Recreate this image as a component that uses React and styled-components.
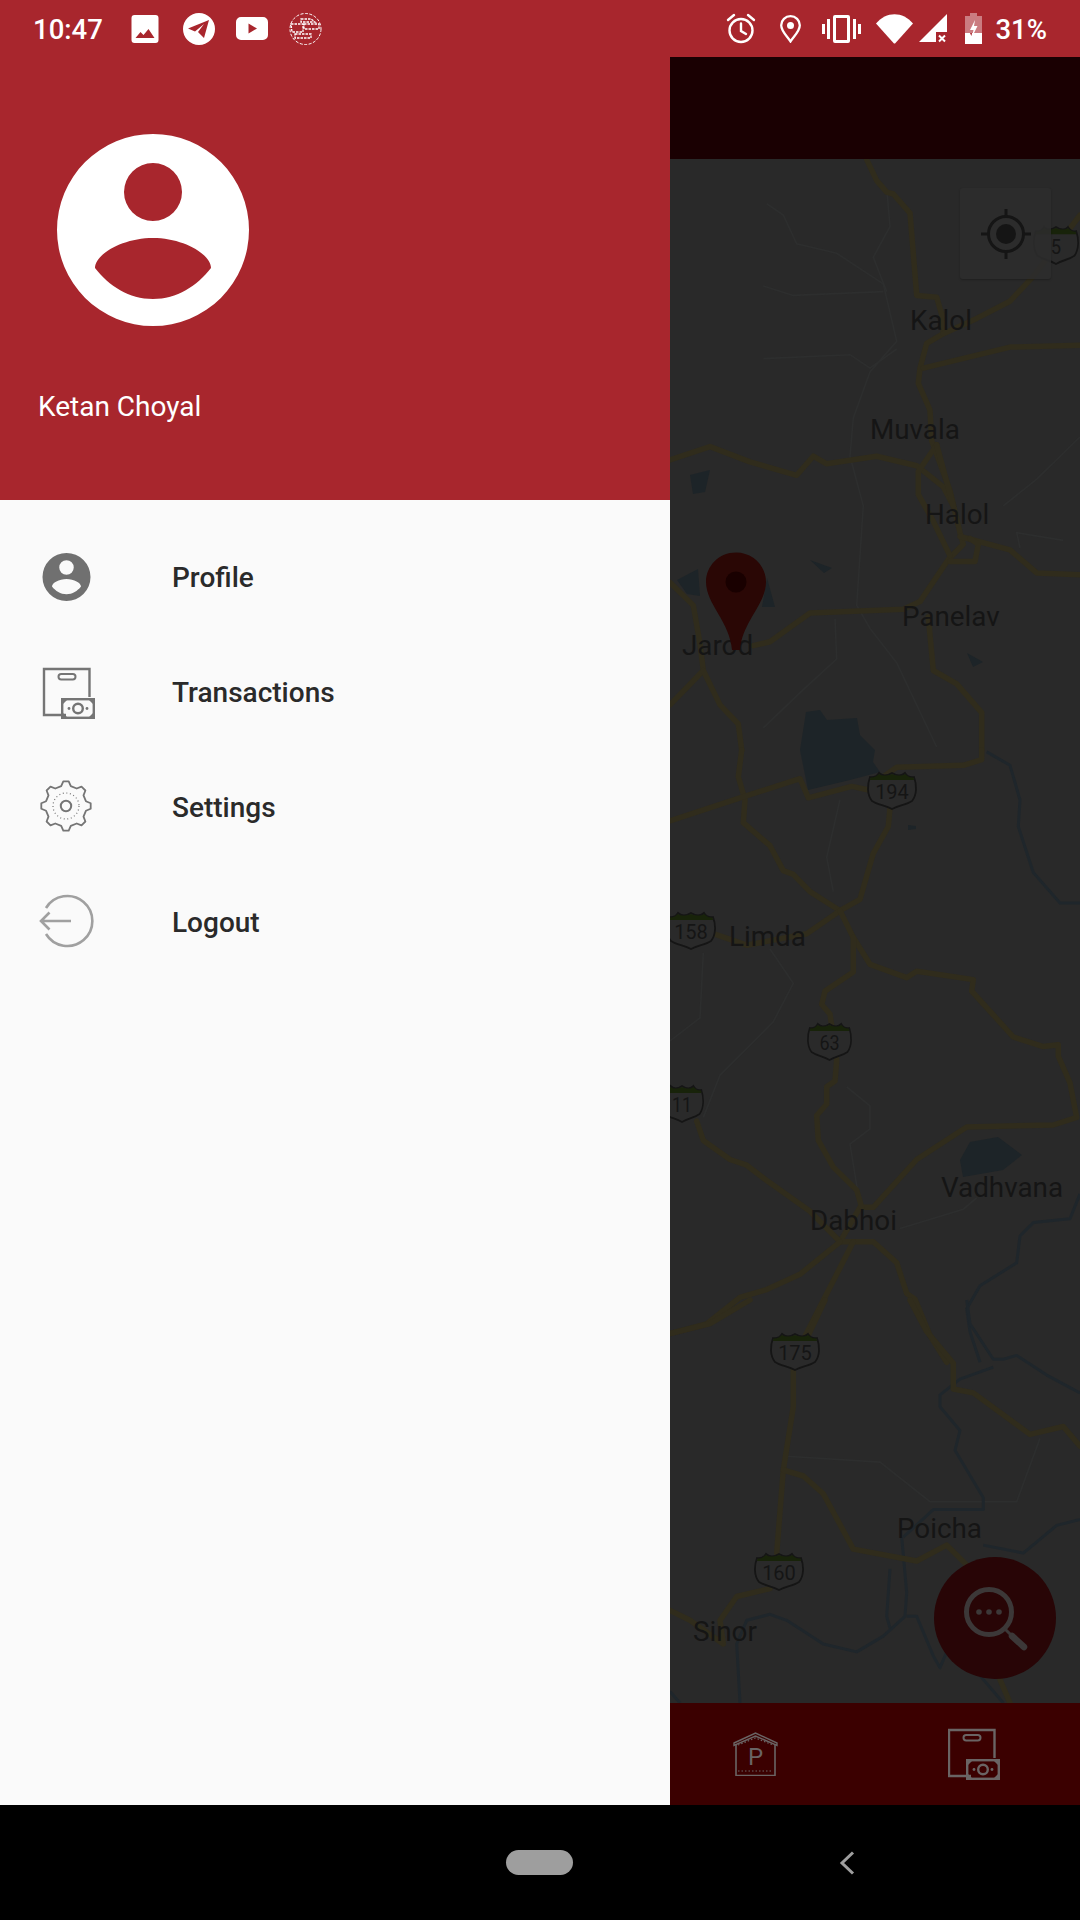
import React from "react";
import styled, { createGlobalStyle } from "styled-components";

const Global = createGlobalStyle`
  html, body { margin: 0; padding: 0; background: #000; }
  #root { width: 1080px; height: 1920px; overflow: hidden; }
  * { box-sizing: border-box; }
`;

const Page = styled.div`
  width: 1080px; height: 1920px; display: flex; flex-direction: column;
  font-family: Roboto, "Noto Sans", sans-serif; background: #000;
`;

/* ---------- status bar ---------- */
const StatusBar = styled.header`
  height: 57px; flex: none; background: #a8262d; color: #fff;
  display: flex; align-items: center; justify-content: space-between;
  padding: 0 33px 0 33px;
`;
const StatusGroup = styled.div`display: flex; align-items: center;`;
const StatusText = styled.span`
  font-size: 27.5px; font-weight: 500; line-height: 30px; padding-top: 2px; margin-left: ${p => p.$gap || 0}px;
`;
const StatusIcon = styled.svg`
  display: block; flex: none; margin-left: ${p => p.$gap || 0}px; color: #fff;
`;

/* ---------- main split ---------- */
const Body = styled.div`flex: 1; min-height: 0; display: flex;`;
const Drawer = styled.aside`
  width: 670px; flex: none; display: flex; flex-direction: column; background: #fafafa;
`;
const DrawerHeader = styled.div`
  height: 443px; flex: none; background: #a8262d; color: #fff;
  padding: 77px 0 0 38px; display: flex; flex-direction: column;
`;
const Avatar = styled.svg`display: block; margin-left: 19px; color: #fff;`;
const UserName = styled.div`
  margin-top: 62px; font-size: 28px; line-height: 38px; font-weight: 400;
`;
const Menu = styled.nav`padding-top: 18px; display: flex; flex-direction: column;`;
const MenuRow = styled.div`
  height: 115px; display: flex; align-items: center; padding-left: 38px;
`;
const MenuIcon = styled.svg`display: block; flex: none; margin-right: 74px;`;
const MenuLabel = styled.span`
  font-size: 28px; font-weight: 500; color: #2a2a2a; line-height: 36px; padding-top: 5px;
`;

const Behind = styled.main`flex: 1; min-width: 0; display: flex; flex-direction: column;`;
const TopBar = styled.div`height: 102px; flex: none; background: #1a0002;`;
const MapArea = styled.div`position: relative; flex: 1; min-height: 0; background: #292929; overflow: hidden;`;
const MapSvg = styled.svg`display: block; width: 410px; height: 1544px;`;
const MapLabel = styled.text`
  font-family: Roboto, sans-serif; font-size: 27.8px; fill: #151515;
`;
const ShieldNum = styled.text`
  font-family: Roboto, sans-serif; font-size: 20px; fill: #151515; text-anchor: middle;
`;
const LocateButton = styled.div`
  position: absolute; top: 29px; right: 29px; width: 91px; height: 91px; border-radius: 3px;
  background: rgba(44,44,44,.88); box-shadow: 0 1px 2px rgba(0,0,0,.25);
  display: flex; align-items: center; justify-content: center;
`;
const Fab = styled.div`
  position: absolute; right: 24px; bottom: 24px; width: 122px; height: 122px; border-radius: 50%;
  background: #280506; display: flex; align-items: center; justify-content: center;
`;
const BottomBar = styled.div`
  height: 102px; flex: none; background: #3b0000; display: flex; align-items: center;
  justify-content: space-between; padding: 0 80px 0 63px;
`;
const BarIcon = styled.svg`display: block; flex: none;`;

/* ---------- system nav ---------- */
const NavBar = styled.footer`
  height: 115px; flex: none; background: #000; display: flex; align-items: center;
  padding-left: 506px;
`;
const HomePill = styled.div`width: 67px; height: 25px; border-radius: 13px; background: #9e9e9e;`;
const BackIcon = styled.svg`display: block; margin-left: 266px;`;

/* ---------- icons ---------- */
const AVATAR_PATH =
  "M96 0a96 96 0 1 0 0 192a96 96 0 1 0 0-192Z M96 29a29 29 0 1 1 0 58a29 29 0 1 1 0-58Z M38 134C38 120 66 104 96 104C126 104 154 120 154 134C140 152 120 165 96 165C72 165 52 152 38 134Z";

const gearPath = (() => {
  const pts = [];
  const n = 8;
  for (let i = 0; i < n; i++) {
    const a = (i / n) * Math.PI * 2 - Math.PI / 2;
    const step = (Math.PI * 2) / n;
    const p = (r, d) => [28 + r * Math.cos(a + d * step), 30 + r * Math.sin(a + d * step)];
    pts.push(p(20.5, -0.3), p(24.8, -0.14), p(24.8, 0.14), p(20.5, 0.3));
  }
  return "M" + pts.map(([x, y]) => `${x.toFixed(1)} ${y.toFixed(1)}`).join("L") + "Z";
})();

const Money = ({ x, y, color }) => (
  <g transform={`translate(${x} ${y})`} stroke={color} fill="none">
    <rect x="1.2" y="1.2" width="31.6" height="18.6" strokeWidth="2.4" />
    <circle cx="17" cy="10.5" r="4.8" strokeWidth="2.4" />
    <circle cx="8" cy="10.5" r="1.4" fill={color} stroke="none" />
    <circle cx="26" cy="10.5" r="1.4" fill={color} stroke="none" />
    <path d="M1 1H7L1 7ZM33 1H27L33 7ZM1 20H7L1 14ZM33 20H27L33 14Z" fill={color} stroke="none" />
  </g>
);

const TxnGlyph = ({ color }) => (
  <>
    <path d="M51.5 36V8H6V54H28" fill="none" stroke={color} strokeWidth="2.4" />
    <rect x="20.5" y="13" width="17" height="5.5" rx="2.7" fill="none" stroke={color} strokeWidth="2" />
    <Money x={23} y={37} color={color} />
  </>
);

const Road = { fill: "none", stroke: "#302c1c", strokeWidth: 5.5, strokeLinejoin: "round", strokeLinecap: "round" };

const mapPts = {
  a: { ox: 670, oy: 150, sy: 0.3827 },
  b: { ox: 670, oy: 750, sy: 0.3827 },
  c: { ox: 670, oy: 1300, sy: 0.3954 },
};
const zPath = (crop, s) => {
  const { ox, oy, sy } = mapPts[crop];
  const n = s.trim().split(/\s+/).map(t => t.split(",").map(Number));
  return "M" + n.map(([x, y]) => `${(ox + x / 3).toFixed(1)} ${(oy + y * sy).toFixed(1)}`).join("L");
};

const roads = [
  ["a", "590,25 620,80 650,110 670,115 720,165 740,380 800,385 815,430 820,480 770,505 750,570 745,610 780,680 785,760 840,890 870,1000 880,1030 835,1070 750,1180 700,1200 420,1210 300,1285 250,1295"],
  ["a", "820,480 920,440 1020,395 1090,330 1230,170"],
  ["a", "760,570 1020,515 1230,510"],
  ["a", "0,810 120,775 240,815 380,850 430,800 470,820 620,800 740,825 820,880 850,930"],
  ["a", "800,770 745,840 745,900 790,970 840,1060"],
  ["a", "800,770 850,930"],
  ["a", "870,1010 1020,1045 1100,1105 1230,1110"],
  ["a", "900,1015 925,1030 915,1075 840,1075"],
  ["a", "775,1220 790,1360 860,1395 935,1470 935,1568"],
  ["a", "0,1130 70,1190 90,1290 100,1360 0,1450"],
  ["a", "100,1360 150,1450 205,1500 215,1568"],
  ["b", "935,0 935,25 880,40 680,45 640,70"],
  ["b", "215,0 205,70 225,130 220,190 300,250 340,315 370,325 420,370 510,420"],
  ["b", "0,185 210,125 390,75 415,125 545,95 600,105"],
  ["b", "660,150 655,200 610,270 570,390 510,420 410,480 230,510 130,480"],
  ["b", "510,420 550,490 600,560 710,595 740,578 910,600 905,630 1030,750 1120,775 1165,770 1165,800 1200,870 1220,960 1150,980 890,985 740,1070 610,1195 570,1195 510,1285"],
  ["b", "550,490 550,580 465,630 455,665 480,690 500,810 495,865 470,880 470,925 440,955 445,1020 490,1090 560,1150 575,1195"],
  ["b", "80,970 100,1020 180,1070 230,1085 290,1125 420,1205 510,1285 610,1285 680,1340 710,1420 735,1435 780,1530 830,1600"],
  ["b", "510,1285 390,1370 290,1410 210,1430 110,1500 0,1525"],
  ["b", "550,1285 400,1540"],
  ["c", "720,0 770,80 850,160 850,225 910,235 1080,340 1180,320 1230,370"],
  ["c", "0,85 120,60 240,0"],
  ["c", "465,0 370,170 370,270 340,430 320,640"],
  ["c", "340,430 400,445 460,490 550,630 740,660 830,620 890,670"],
  ["c", "985,950 1020,1019"],
  ["c", "300,730 200,750 150,810 160,870 60,810 0,785"],
];

const rivers = [
  ["b", "1230,1160 1200,1225 1090,1235 1050,1270 1040,1340 930,1400 890,1460 900,1520 930,1600"],
  ["c", "890,0 900,60 970,150 1000,150 1040,140 1130,190 1230,235"],
  ["c", "970,170 870,200 810,240 810,270 870,330 855,380 940,500 940,530 790,530 700,600"],
  ["c", "695,600 710,740 705,800 640,850 560,890 460,870 350,810 300,795 230,810 200,870 210,1019"],
  ["c", "660,680 650,800 660,830"],
  ["c", "710,800 740,800 790,900 810,930 830,890"],
  ["c", "1230,555 1160,570 1060,640 940,620"],
  ["c", "930,950 1000,1019"],
  ["c", "0,990 30,1019"],
  ["b", "950,5 1020,40 1050,130 1045,200 1090,320 1170,400 1230,400"],
];

const thin = [
  ["a", "290,140 340,170 380,245 500,270 640,350 680,500 600,580 550,700 540,800 580,930 560,1190 600,1250 680,1340 800,1560"],
  ["a", "280,355 370,380 640,370"],
  ["a", "280,545 540,535 600,570 680,520"],
  ["a", "650,100 660,200 610,280 650,370"],
  ["a", "280,1510 400,1410 500,1330 495,1225"],
  ["a", "1050,1040 1040,1000 1180,1020"],
  ["a", "1000,930 1100,860 1230,750"],
  ["b", "510,130 470,280 490,370"],
  ["b", "300,520 370,610 310,710 150,850 100,960"],
  ["b", "100,530 90,700 0,760"],
  ["b", "530,880 600,930 600,990 540,1030 570,1190"],
  ["b", "690,1250 880,1200 920,1170"],
  ["c", "350,395 630,410 780,510 1040,510 1110,350"],
];

const waters = [
  "800,750 806,712 820,710 827,720 857,718 860,735 875,750 873,762 880,772 850,780 808,790",
  "690,475 710,470 705,492 693,494",
  "677,580 698,569 700,596 687,594",
  "767,578 775,607 762,607",
  "967,653 983,662 973,667",
  "810,560 832,568 824,573",
  "960,1160 970,1142 998,1137 1022,1155 1003,1170 963,1177",
  "908,825 916,826 916,829 908,830",
];

const Shield = ({ x, y, w = 50, h = 38, n }) => (
  <g transform={`translate(${x} ${y}) scale(${w / 50} ${h / 38})`}>
    <path d="M3 6C7 7 10 5 12 2C15 5 20 5 25 2C30 5 35 5 38 2C40 5 43 7 47 6C50 14 50 24 45 30C39 34 32 34 25 38C18 34 11 34 5 30C0 24 0 14 3 6Z"
      fill="#2a2a2a" stroke="#151515" strokeWidth="1.8" />
    <path d="M3.5 6.5C7 7 10 5 12 3C15 5 20 5 25 3C30 5 35 5 38 3C40 5 43 7 46.5 6.5L47 9H3Z" fill="#18230a" />
    <ShieldNum x="25" y="28">{n}</ShieldNum>
  </g>
);

const labels = [
  ["Kalol", 910, 330], ["Muvala", 870, 439], ["Halol", 925, 524], ["Panelav", 902, 626],
  ["Jarod", 682, 655], ["Limda", 729, 946], ["Dabhoi", 810, 1230], ["Vadhvana", 941, 1197],
  ["Poicha", 897, 1538], ["Sinor", 693, 1641],
];

export default function App() {
  return (
    <Page>
      <Global />
      <StatusBar>
        <StatusGroup>
          <StatusText>10:47</StatusText>
          <StatusIcon $gap={28} width="28" height="28" viewBox="0 0 27 28">
            <path fillRule="evenodd" fill="currentColor"
              d="M3 0H24A3 3 0 0 1 27 3V25A3 3 0 0 1 24 28H3A3 3 0 0 1 0 25V3A3 3 0 0 1 3 0ZM4 23H23L17 14L12 20L9 17Z" />
          </StatusIcon>
          <StatusIcon $gap={24} width="32" height="34" viewBox="0 0 32 34">
            <path fillRule="evenodd" fill="currentColor"
              d="M16 1A16 16 0 1 0 16 33A16 16 0 1 0 16 1ZM26 8L5 16.5L12 19.5L21 12L15 20L21 26Z" />
          </StatusIcon>
          <StatusIcon $gap={21} width="32" height="23" viewBox="0 0 32 23">
            <path fillRule="evenodd" fill="currentColor"
              d="M5 0H27A5 5 0 0 1 32 5V18A5 5 0 0 1 27 23H5A5 5 0 0 1 0 18V5A5 5 0 0 1 5 0ZM12.5 6.5V16.5L21 11.5Z" />
          </StatusIcon>
          <StatusIcon $gap={21} width="33" height="34" viewBox="0 0 33 34">
            <circle cx="16.5" cy="17" r="15.5" fill="none" stroke="currentColor" strokeWidth="1" strokeDasharray="3 1.5" />
            <path d="M2 12H14V20H3ZM15 12H30V17H15ZM6 22H22V26H6ZM12 7H22L26 10H12Z" fill="none" stroke="currentColor" strokeWidth="1.3" strokeDasharray="2.5 1" />
          </StatusIcon>
        </StatusGroup>
        <StatusGroup>
          <StatusIcon width="30" height="31" viewBox="0 0 30 31" fill="none" stroke="currentColor" strokeWidth="2.4">
            <circle cx="15" cy="17.5" r="11.5" />
            <path d="M15 10.5V18L20 21M2 7L8 2M28 7L22 2" strokeLinecap="round" />
          </StatusIcon>
          <StatusIcon $gap={24} width="21" height="28" viewBox="0 0 21 28">
            <path d="M10.5 1.2C5.3 1.2 1.2 5.3 1.2 10.3C1.2 16.5 7.5 21.5 10.5 26.5C13.5 21.5 19.8 16.5 19.8 10.3C19.8 5.3 15.7 1.2 10.5 1.2Z" fill="none" stroke="currentColor" strokeWidth="2.3" />
            <circle cx="10.5" cy="10.5" r="3.5" fill="currentColor" />
          </StatusIcon>
          <StatusIcon $gap={21} width="39" height="28" viewBox="0 0 39 28" fill="currentColor">
            <path fillRule="evenodd" d="M13 0H26A2 2 0 0 1 28 2V26A2 2 0 0 1 26 28H13A2 2 0 0 1 11 26V2A2 2 0 0 1 13 0ZM14 3V25H25V3Z" />
            <rect x="5" y="4" width="3" height="20" /><rect x="0" y="9" width="3" height="10" />
            <rect x="31" y="4" width="3" height="20" /><rect x="36" y="9" width="3" height="10" />
          </StatusIcon>
          <StatusIcon $gap={15} width="37" height="30" viewBox="0 0 37 30">
            <path d="M0 9.5C10 -3 27 -3 37 9.5L19.5 29a1.4 1.4 0 0 1-2 0Z" fill="currentColor" />
          </StatusIcon>
          <StatusIcon $gap={6} width="28" height="29" viewBox="0 0 28 29">
            <path fillRule="evenodd" fill="currentColor" d="M28 0V18H17V28H0Z" />
            <path d="M20 21.5L26 27.5M26 21.5L20 27.5" stroke="currentColor" strokeWidth="2" />
          </StatusIcon>
          <StatusIcon $gap={18} width="17" height="31" viewBox="0 0 17 31">
            <path d="M5 0H12V3H17V20H0V3H5Z" fill="currentColor" opacity=".4" />
            <path d="M0 20H17V31H0Z" fill="currentColor" />
            <path d="M10 7L5 17H8.5L7 24L12.5 13H9Z" fill="#fff" />
            <path d="M5 20L7 20L6.4 23Z" fill="#a8262d" />
          </StatusIcon>
          <StatusText $gap={13}>31%</StatusText>
        </StatusGroup>
      </StatusBar>

      <Body>
        <Drawer>
          <DrawerHeader>
            <Avatar width="192" height="192" viewBox="0 0 192 192">
              <path d={AVATAR_PATH} fill="currentColor" fillRule="evenodd" />
            </Avatar>
            <UserName>Ketan Choyal</UserName>
          </DrawerHeader>
          <Menu>
            <MenuRow>
              <MenuIcon width="60" height="60" viewBox="0 0 60 60">
                <g transform="translate(4.5 7) scale(.25)">
                  <path d={AVATAR_PATH} fill="#707070" fillRule="evenodd" />
                </g>
              </MenuIcon>
              <MenuLabel>Profile</MenuLabel>
            </MenuRow>
            <MenuRow>
              <MenuIcon width="60" height="60" viewBox="0 0 60 60">
                <TxnGlyph color="#757575" />
              </MenuIcon>
              <MenuLabel>Transactions</MenuLabel>
            </MenuRow>
            <MenuRow>
              <MenuIcon width="60" height="60" viewBox="0 0 60 60" fill="none" stroke="#757575">
                <path d={gearPath} strokeWidth="1.8" strokeLinejoin="round" />
                <circle cx="28" cy="30" r="13" strokeWidth="1.2" strokeDasharray="1 2.6" />
                <circle cx="28" cy="30" r="5.2" strokeWidth="2" />
              </MenuIcon>
              <MenuLabel>Settings</MenuLabel>
            </MenuRow>
            <MenuRow>
              <MenuIcon width="60" height="60" viewBox="0 0 60 60" fill="none" stroke="#a0a0a0" strokeWidth="2.6">
                <path d="M8 17A25 25 0 1 1 8 43" />
                <path d="M33 30H3M11.5 21.5L3 30L11.5 38.5" />
              </MenuIcon>
              <MenuLabel>Logout</MenuLabel>
            </MenuRow>
          </Menu>
        </Drawer>

        <Behind>
          <TopBar />
          <MapArea>
            <MapSvg viewBox="670 159 410 1544">
              {thin.map(([c, s], i) => <path key={i} d={zPath(c, s)} fill="none" stroke="#2d2e2e" strokeWidth="1.6" />)}
              {waters.map((w, i) => <polygon key={i} points={w} fill="#1d2428" />)}
              {rivers.map(([c, s], i) => <path key={i} d={zPath(c, s)} fill="none" stroke="#1f262b" strokeWidth="3" strokeLinejoin="round" />)}
              {roads.map(([c, s], i) => <path key={i} d={zPath(c, s)} {...Road} />)}
              <Shield x={1033} y={225} w={46} h={39} n="5" />
              <Shield x={867} y={771} n="194" />
              <Shield x={666} y={911} n="158" />
              <Shield x={807} y={1022} w={45} n="63" />
              <Shield x={660} y={1084} w={44} n="11" />
              <Shield x={770} y={1332} n="175" />
              <Shield x={754} y={1552} n="160" />
              {labels.map(([t, x, y]) => <MapLabel key={t} x={x} y={y}>{t}</MapLabel>)}
              <path d="M736 552.5C719 552.5 706 566 706 582C706 604 730 622 732 650H740C742 622 766 604 766 582C766 566 753 552.5 736 552.5Z" fill="#2a0705" />
              <circle cx="736" cy="582" r="10.5" fill="#190000" />
            </MapSvg>
            <LocateButton>
              <svg width="52" height="52" viewBox="0 0 52 52" fill="none" stroke="#151515">
                <circle cx="26" cy="26" r="17.5" strokeWidth="3" />
                <circle cx="26" cy="26" r="10" fill="#151515" stroke="none" />
                <path d="M26 1V8M26 44V51M1 26H8M44 26H51" strokeWidth="3" />
              </svg>
            </LocateButton>
            <Fab>
              <svg width="122" height="122" viewBox="0 0 122 122" fill="none" stroke="#3c3838">
                <circle cx="55" cy="55" r="22.5" strokeWidth="5" />
                <path d="M71 72L78 79" strokeWidth="3" />
                <path d="M78 79L90 90" strokeWidth="6.5" strokeLinecap="round" />
                <circle cx="45" cy="55" r="2.8" fill="#3c3838" stroke="none" />
                <circle cx="55" cy="55" r="2.8" fill="#3c3838" stroke="none" />
                <circle cx="65" cy="55" r="2.8" fill="#3c3838" stroke="none" />
              </svg>
            </Fab>
          </MapArea>
          <BottomBar>
            <BarIcon width="45" height="44" viewBox="0 0 45 44" fill="none" stroke="#6a6464">
              <path d="M1 11L22.5 1L44 11V13.5L22.5 4L1 13.5Z" strokeWidth="1.4" />
              <path d="M3 13V43.5H42V13" strokeWidth="1.6" />
              <path d="M5 13L22.5 6L40 13M5 39H40" strokeWidth="1.2" strokeDasharray="1.5 2" />
              <text x="22.5" y="33" textAnchor="middle" fontFamily="Roboto, sans-serif" fontSize="24" fill="#6a6464" stroke="none">P</text>
            </BarIcon>
            <BarIcon width="52" height="53" viewBox="5 6 52 53">
              <TxnGlyph color="#6a6464" />
            </BarIcon>
          </BottomBar>
        </Behind>
      </Body>

      <NavBar>
        <HomePill />
        <BackIcon width="16" height="24" viewBox="0 0 16 24" fill="none" stroke="#9e9e9e" strokeWidth="3">
          <path d="M14 1.5L3 12L14 22.5" />
        </BackIcon>
      </NavBar>
    </Page>
  );
}
